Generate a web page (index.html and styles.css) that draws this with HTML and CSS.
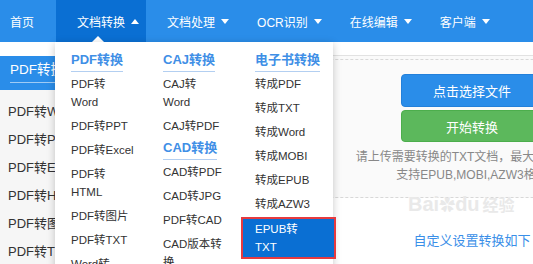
FILE: index.html
```html
<!DOCTYPE html>
<html lang="zh-CN">
<head>
    <meta charset="UTF-8">
    <meta name="viewport" content="width=device-width, initial-scale=1.0">
    <title>TXT转EPUB - 在线转换</title>
    <link rel="stylesheet" href="styles.css">
</head>
<body>
    <div class="nav">
        <a class="nav-item home">首页</a>
        <a class="nav-item active">文档转换<span class="tri up"></span></a>
        <a class="nav-item">文档处理<span class="tri"></span></a>
        <a class="nav-item">OCR识别<span class="tri"></span></a>
        <a class="nav-item">在线编辑<span class="tri"></span></a>
        <a class="nav-item">客户端<span class="tri"></span></a>
        <span class="pointer"></span>
    </div>

    <div class="page">
        <div class="sidebar">
            <div class="side-head"><span>PDF转换</span></div>
            <ul class="side-list">
                <li>PDF转Word</li>
                <li>PDF转PPT</li>
                <li>PDF转Excel</li>
                <li>PDF转HTML</li>
                <li>PDF转图片</li>
                <li>PDF转TXT</li>
            </ul>
        </div>

        <div class="content">
            <div class="upload">
                <button class="btn btn-blue">点击选择文件</button>
                <button class="btn btn-green">开始转换</button>
                <p class="tip">请上传需要转换的TXT文档，最大支持100M<br>支持EPUB,MOBI,AZW3格式</p>
            </div>
            <a class="setting-link">自定义设置转换如下</a>
            <div class="watermark">Bai<span class="paw">&#10047;</span>du<span class="wm-cn">经验</span></div>
        </div>
    </div>

    <!-- dropdown of 文档转换 -->
    <div class="dropdown">
        <div class="col">
            <div class="col-head"><span>PDF转换</span></div>
            <div class="item">PDF转<br>Word</div>
            <div class="item">PDF转PPT</div>
            <div class="item">PDF转Excel</div>
            <div class="item">PDF转<br>HTML</div>
            <div class="item">PDF转图片</div>
            <div class="item">PDF转TXT</div>
            <div class="item">Word转<br>PDF</div>
        </div>
        <div class="col">
            <div class="col-head"><span>CAJ转换</span></div>
            <div class="item">CAJ转<br>Word</div>
            <div class="item">CAJ转PDF</div>
            <div class="col-head second"><span>CAD转换</span></div>
            <div class="item">CAD转PDF</div>
            <div class="item">CAD转JPG</div>
            <div class="item">PDF转CAD</div>
            <div class="item">CAD版本转<br>换</div>
        </div>
        <div class="col col-last">
            <div class="col-head"><span>电子书转换</span></div>
            <div class="item">转成PDF</div>
            <div class="item">转成TXT</div>
            <div class="item">转成Word</div>
            <div class="item">转成MOBI</div>
            <div class="item">转成EPUB</div>
            <div class="item">转成AZW3</div>
            <div class="item current">EPUB转<br>TXT</div>
        </div>
    </div>
</body>
</html>
```

FILE: styles.css
```css
body { margin: 0; font-family: "Liberation Sans", "Noto Sans CJK SC", sans-serif; color: #333; overflow: hidden; background: #fff; }

/* top nav */
.nav { position: relative; display: flex; height: 42px; background: #2a8de9; }
.nav-item { display: flex; align-items: center; padding: 0 7px 0 21px; color: #fff; font-size: 12px; white-space: nowrap; }
.nav-item.home { padding: 0 22px 0 10px; }
.nav-item.active { background: #0a6fd3; }
.tri { display: inline-block; margin-left: 6px; width: 0; height: 0; border-left: 4px solid transparent; border-right: 4px solid transparent; border-top: 5px solid #fff; }
.tri.up { border-top: none; border-bottom: 5px solid #fff; }
.pointer { position: absolute; left: 92px; bottom: 0; width: 0; height: 0; border-left: 6px solid transparent; border-right: 6px solid transparent; border-bottom: 6px solid #fff; }

/* page */
.page { display: flex; width: 800px; }
.sidebar { width: 150px; flex: none; padding-top: 14px; }
.side-head { height: 34px; box-sizing: border-box; padding: 5px 0 0 10px; background: #2a8de9; color: #fff; font-size: 13.5px; line-height: 18px; }
.side-head span { display: block; padding-bottom: 3px; border-bottom: 1px solid rgba(255,255,255,0.55); }
.side-list { list-style: none; margin: 0; padding: 8px 0 0 8px; background: #f6f6f6; height: 200px; }
.side-list li { width: 47px; overflow: hidden; font-size: 13px; line-height: 28px; white-space: nowrap; }

.content { position: relative; width: 644px; flex: none; padding-top: 13px; text-align: center; }
.upload { border-top: 1px solid #e2e2e2; background: #fafafa; padding-top: 3px; }
.upload::before { content: ""; display: block; border-top: 1px dashed #d8d8d8; margin-bottom: 14px; }
.btn { display: block; margin: 0 auto 3px; width: 142px; height: 33px; border-radius: 4px; color: #fff; font-size: 13px; font-family: inherit; }
.btn-blue { background: #2a8de9; border: 1px solid #2380da; }
.btn-green { background: #5cb85c; border: 1px solid #4cae4c; height: 32px; }
.tip { margin: 6px 0 0; padding-bottom: 13px; border-bottom: 1px dashed #d8d8d8; color: #888; font-size: 12px; line-height: 18px; white-space: nowrap; }
.setting-link { display: block; margin-top: 32px; color: #3a8fe8; font-size: 13px; }
.watermark { position: absolute; left: 258px; top: 150px; color: #e9e9e9; font-size: 20px; font-weight: bold; }
.paw { font-size: 16px; }
.wm-cn { margin-left: 3px; font-size: 16px; }

/* dropdown menu */
.dropdown { position: absolute; top: 42px; left: 55px; width: 278px; height: 240px; box-sizing: border-box; padding: 9px 0 0 16px; display: flex; background: #fff; box-shadow: 0 2px 8px rgba(0,0,0,0.22); }
.col { width: 92px; flex: none; }
.col-last { width: 78px; }
.col-head { font-size: 13px; font-weight: bold; line-height: 18px; color: #3f8fe6; }
.col-head span { display: inline-block; padding-bottom: 2px; border-bottom: 1px solid #b3cff1; }
.col-head.second { margin-top: 1px; }
.item { padding: 3px 0; font-size: 11.5px; line-height: 18px; white-space: nowrap; color: #333; }
.item.current { margin: 1px 0 0 -14px; padding: 3px 14px; width: 67px; background: #0a6fd3; color: #fff; outline: 2px solid #e63a3f; outline-offset: -2px; }
```
